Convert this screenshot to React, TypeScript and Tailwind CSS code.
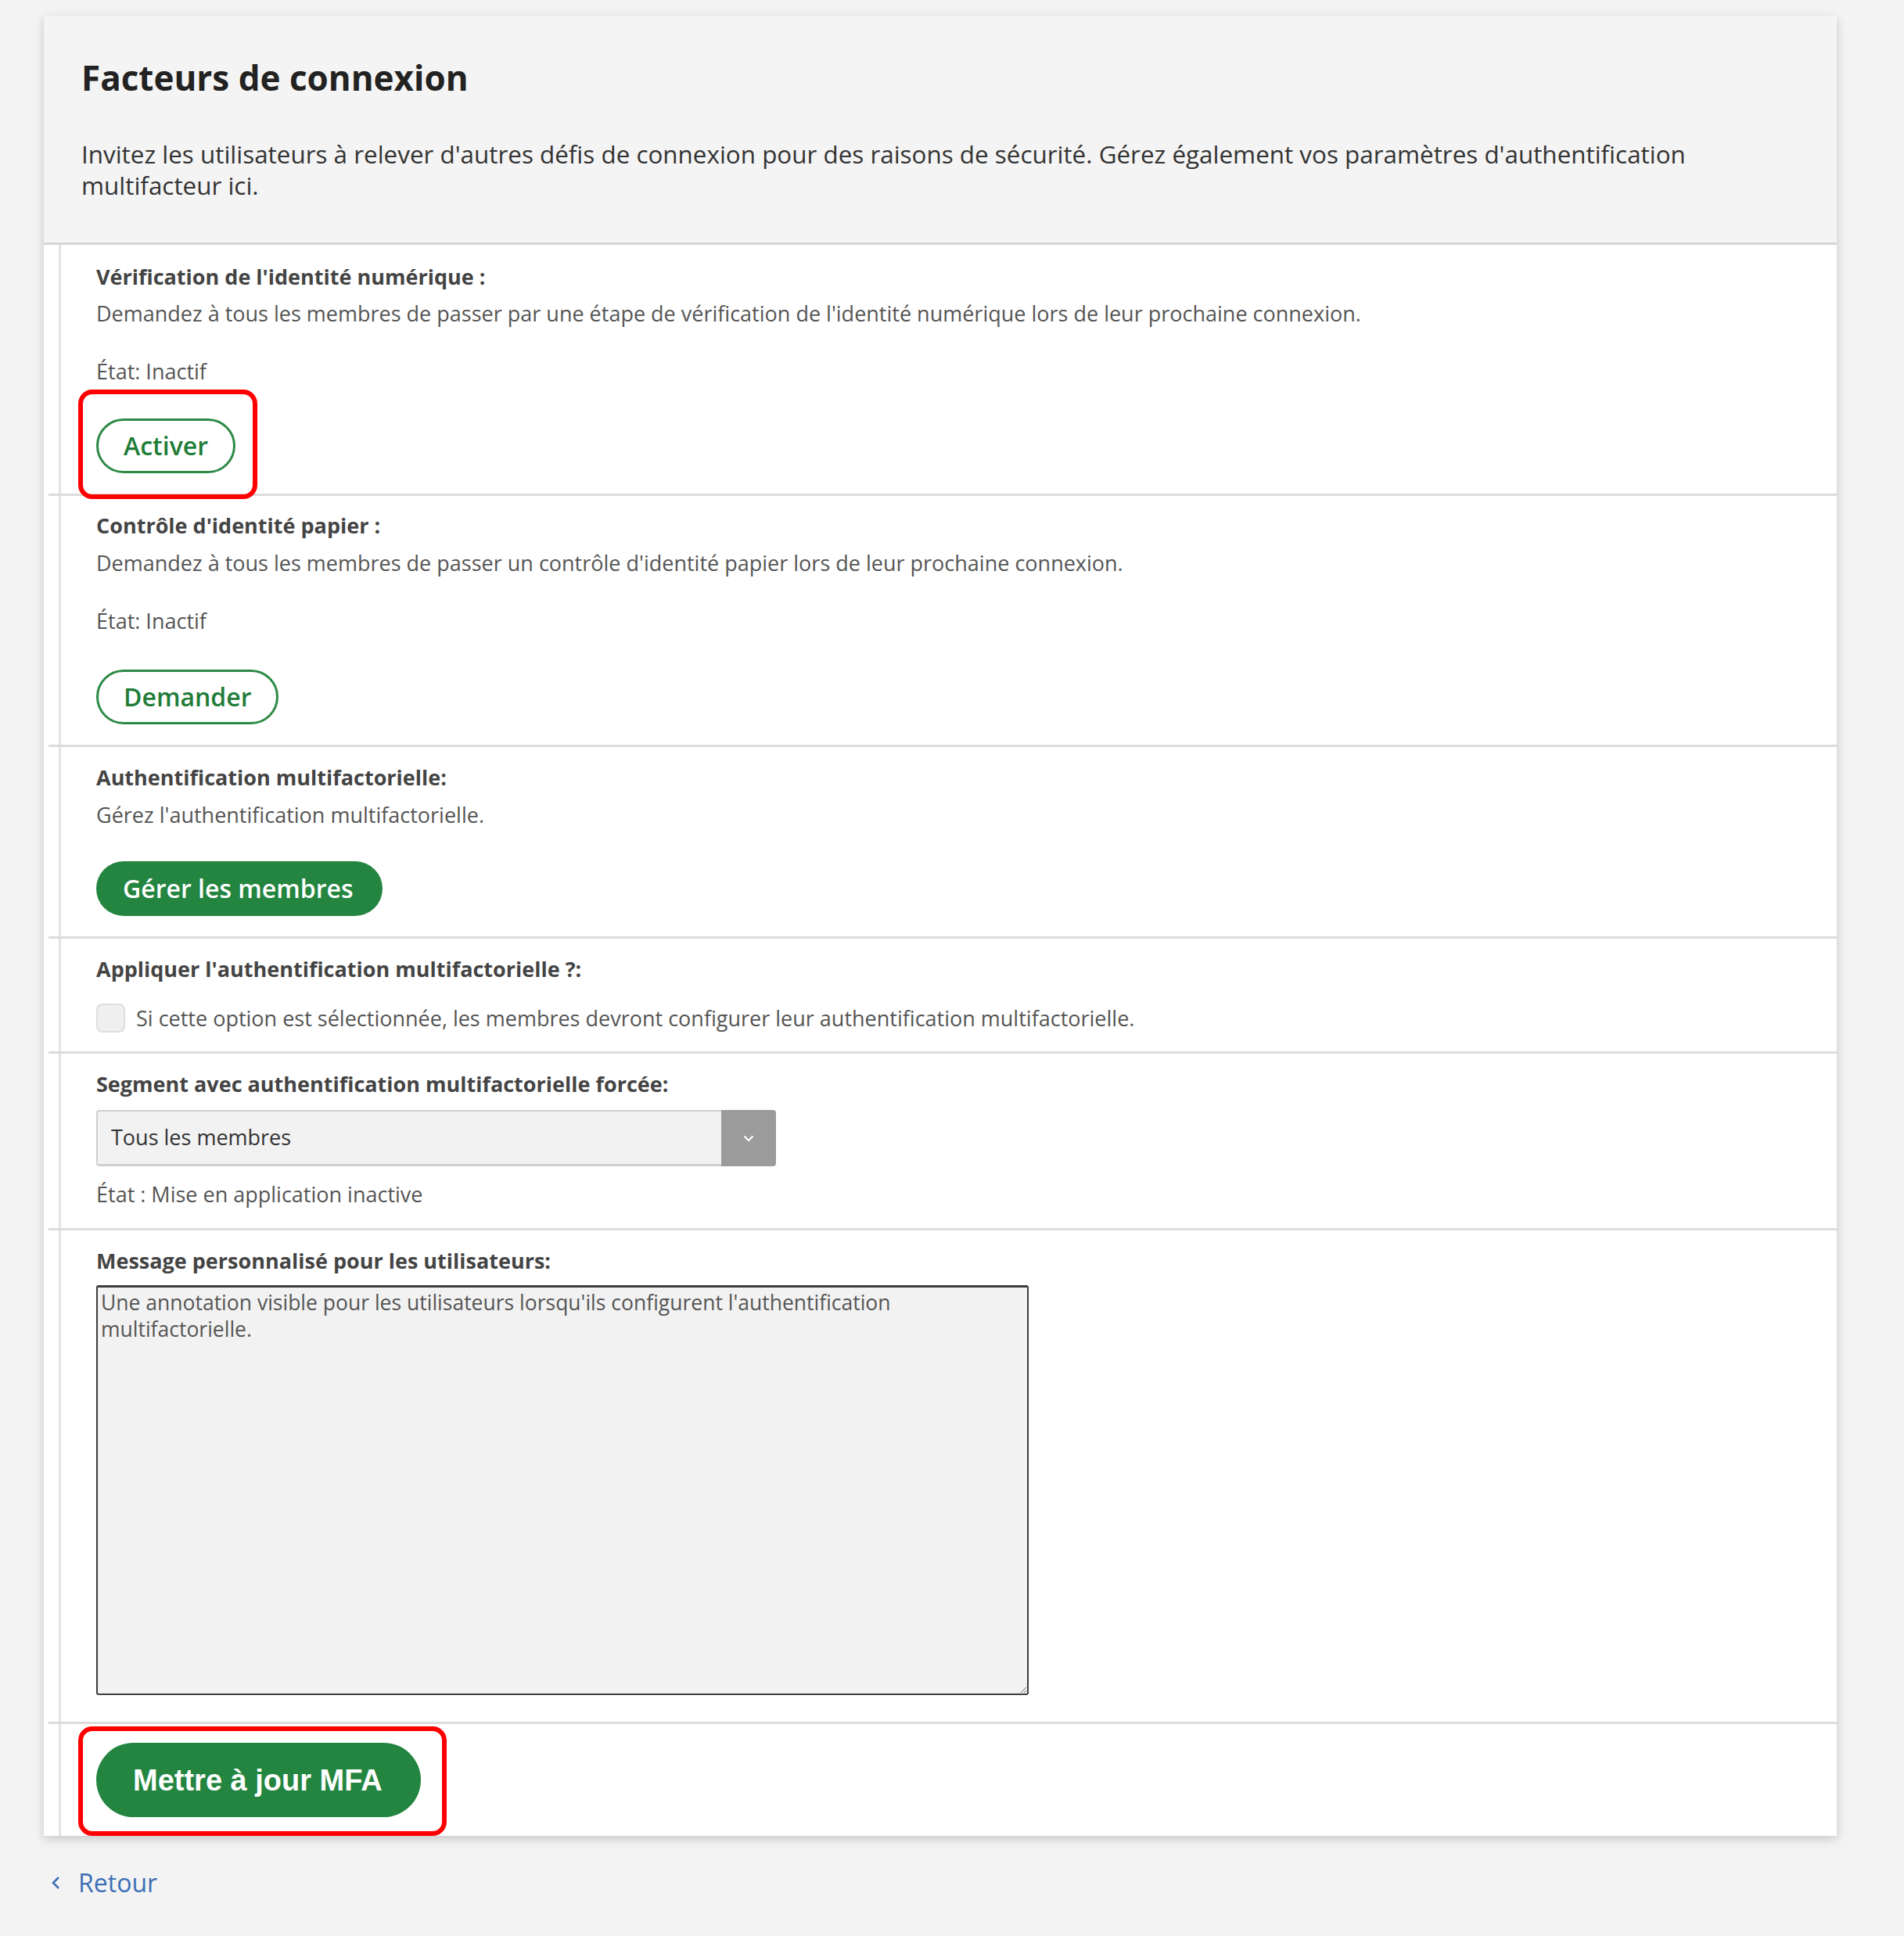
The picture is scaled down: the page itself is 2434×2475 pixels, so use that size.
import React from 'react'

// Outline pill used for the per-factor actions
function OutlineButton({ label }: { label: string }) {
  return (
    <button className="h-[70px] rounded-full border-[3px] border-[#2c8a45] bg-white px-[32px] text-[32px] font-semibold leading-none text-[#1f7d38]">
      {label}
    </button>
  )
}

// Red annotation frame drawn over a control
function Highlight({ className }: { className: string }) {
  return <span className={'pointer-events-none absolute rounded-[18px] border-[6px] border-[#ff0000] ' + className} />
}

function Section({ children, className = '' }: { children: React.ReactNode; className?: string }) {
  return (
    <div className="border-t-[3px] border-[#dcdcdc]">
      <div className={'ml-[13px] border-l-[3px] border-[#e4e4e4] pl-[45px] ' + className}>{children}</div>
    </div>
  )
}

function Title({ children }: { children: React.ReactNode }) {
  return <div className="text-[27px] font-bold leading-[36px] text-[#444]">{children}</div>
}

function Desc({ children, className = '' }: { children: React.ReactNode; className?: string }) {
  return <div className={'text-[27px] leading-[36px] text-[#555] ' + className}>{children}</div>
}

export default function App() {
  return (
    <div className="min-h-screen bg-[#f3f3f3] pl-[56px] pt-[20px] pb-[40px] font-['Open_Sans',sans-serif]">
      <div className="w-[2292px] bg-white shadow-[0_4px_12px_rgba(0,0,0,0.18)]">
        {/* Header */}
        <div className="border-b-[3px] border-[#d6d6d6] bg-[#f4f4f4] pl-[48px] pr-[48px] pt-[57px] pb-[53px]">
          <h1 className="text-[44px] font-bold leading-[44px] text-[#222]">Facteurs de connexion</h1>
          <p className="mt-[56px] max-w-[2160px] text-[31.4px] leading-[40px] text-[#333]">
            Invitez les utilisateurs à relever d'autres défis de connexion pour des raisons de sécurité. Gérez également vos paramètres d'authentification multifacteur ici.
          </p>
        </div>

        {/* Body */}
        <div className="pl-[6px]">
          <div className="ml-[13px] border-l-[3px] border-[#e4e4e4] pl-[45px] pt-[23px] pb-[26px]">
            <Title>Vérification de l'identité numérique :</Title>
            <Desc className="mt-[11px]">
              Demandez à tous les membres de passer par une étape de vérification de l'identité numérique lors de leur prochaine connexion.
            </Desc>
            <Desc className="mt-[38px]">État: Inactif</Desc>
            <div className="relative mt-[42px] inline-block">
              <OutlineButton label="Activer" />
              <Highlight className="-left-[23px] -right-[28px] -top-[37px] -bottom-[33px]" />
            </div>
          </div>

          <Section className="pt-[20px] pb-[26px]">
            <Title>Contrôle d'identité papier :</Title>
            <Desc className="mt-[12px]">
              Demandez à tous les membres de passer un contrôle d'identité papier lors de leur prochaine connexion.
            </Desc>
            <Desc className="mt-[38px]">État: Inactif</Desc>
            <div className="mt-[44px]">
              <OutlineButton label="Demander" />
            </div>
          </Section>

          <Section className="pt-[21px] pb-[26px]">
            <Title>Authentification multifactorielle:</Title>
            <Desc className="mt-[12px]">Gérez l'authentification multifactorielle.</Desc>
            <button className="mt-[41px] h-[70px] rounded-full bg-[#23853f] pl-[34px] pr-[37px] text-[32px] font-semibold leading-none text-white">
              Gérer les membres
            </button>
          </Section>

          <Section className="pt-[21px] pb-[24px]">
            <Title>Appliquer l'authentification multifactorielle ?:</Title>
            <label className="mt-[26px] flex items-center gap-[14px]">
              <span className="h-[37px] w-[37px] rounded-[8px] border-2 border-[#dedede] bg-[#efefef]" />
              <span className="text-[27px] leading-[36px] text-[#555]">
                Si cette option est sélectionnée, les membres devront configurer leur authentification multifactorielle.
              </span>
            </label>
          </Section>

          <Section className="pt-[21px] pb-[25px]">
            <Title>Segment avec authentification multifactorielle forcée:</Title>
            <div className="mt-[15px] flex h-[72px] w-[869px]">
              <div className="flex flex-1 items-center rounded-l-[4px] border-2 border-b-[3px] border-r-0 border-[#cfcfcf] bg-[#f2f2f2] pl-[17px] text-[27px] text-[#333]">
                Tous les membres
              </div>
              <div className="flex w-[70px] items-center justify-center rounded-r-[4px] bg-[#9b9b9b]">
                <svg width="14" height="9" viewBox="0 0 14 9" fill="none" stroke="white" strokeWidth="2.2">
                  <polyline points="1.5,1.5 7,7 12.5,1.5" />
                </svg>
              </div>
            </div>
            <Desc className="mt-[18px]">État : Mise en application inactive</Desc>
          </Section>

          <Section className="pt-[21px] pb-[34px]">
            <Title>Message personnalisé pour les utilisateurs:</Title>
            <textarea
              readOnly
              defaultValue="Une annotation visible pour les utilisateurs lorsqu'ils configurent l'authentification multifactorielle."
              className="mt-[13px] block h-[524px] w-[1192px] rounded-[3px] border-2 border-t-[3px] border-[#3c3c3c] bg-[#f2f2f2] px-[4px] py-[2px] text-[26.5px] leading-[34px] text-[#555] outline-none"
            />
          </Section>

          <Section className="pt-[24px] pb-[24px]">
            <div className="relative inline-block">
              <button className="h-[95px] rounded-full bg-[#23853f] pl-[47px] pr-[49px] font-['Liberation_Sans',Arial,sans-serif] text-[38px] font-bold leading-none text-white">
                Mettre à jour MFA
              </button>
              <Highlight className="-left-[23px] -right-[33px] -top-[21px] -bottom-[24px]" />
            </div>
          </Section>
        </div>
      </div>

      {/* Back link */}
      <a href="#" className="mt-[42px] ml-[9px] flex w-fit items-center gap-[22px] text-[32px] leading-[36px] text-[#3d6fb6]">
        <svg width="13" height="18" viewBox="0 0 13 18" fill="none" stroke="#3d6fb6" strokeWidth="2.5">
          <polyline points="10,2 3,9 10,16" />
        </svg>
        Retour
      </a>
    </div>
  )
}
